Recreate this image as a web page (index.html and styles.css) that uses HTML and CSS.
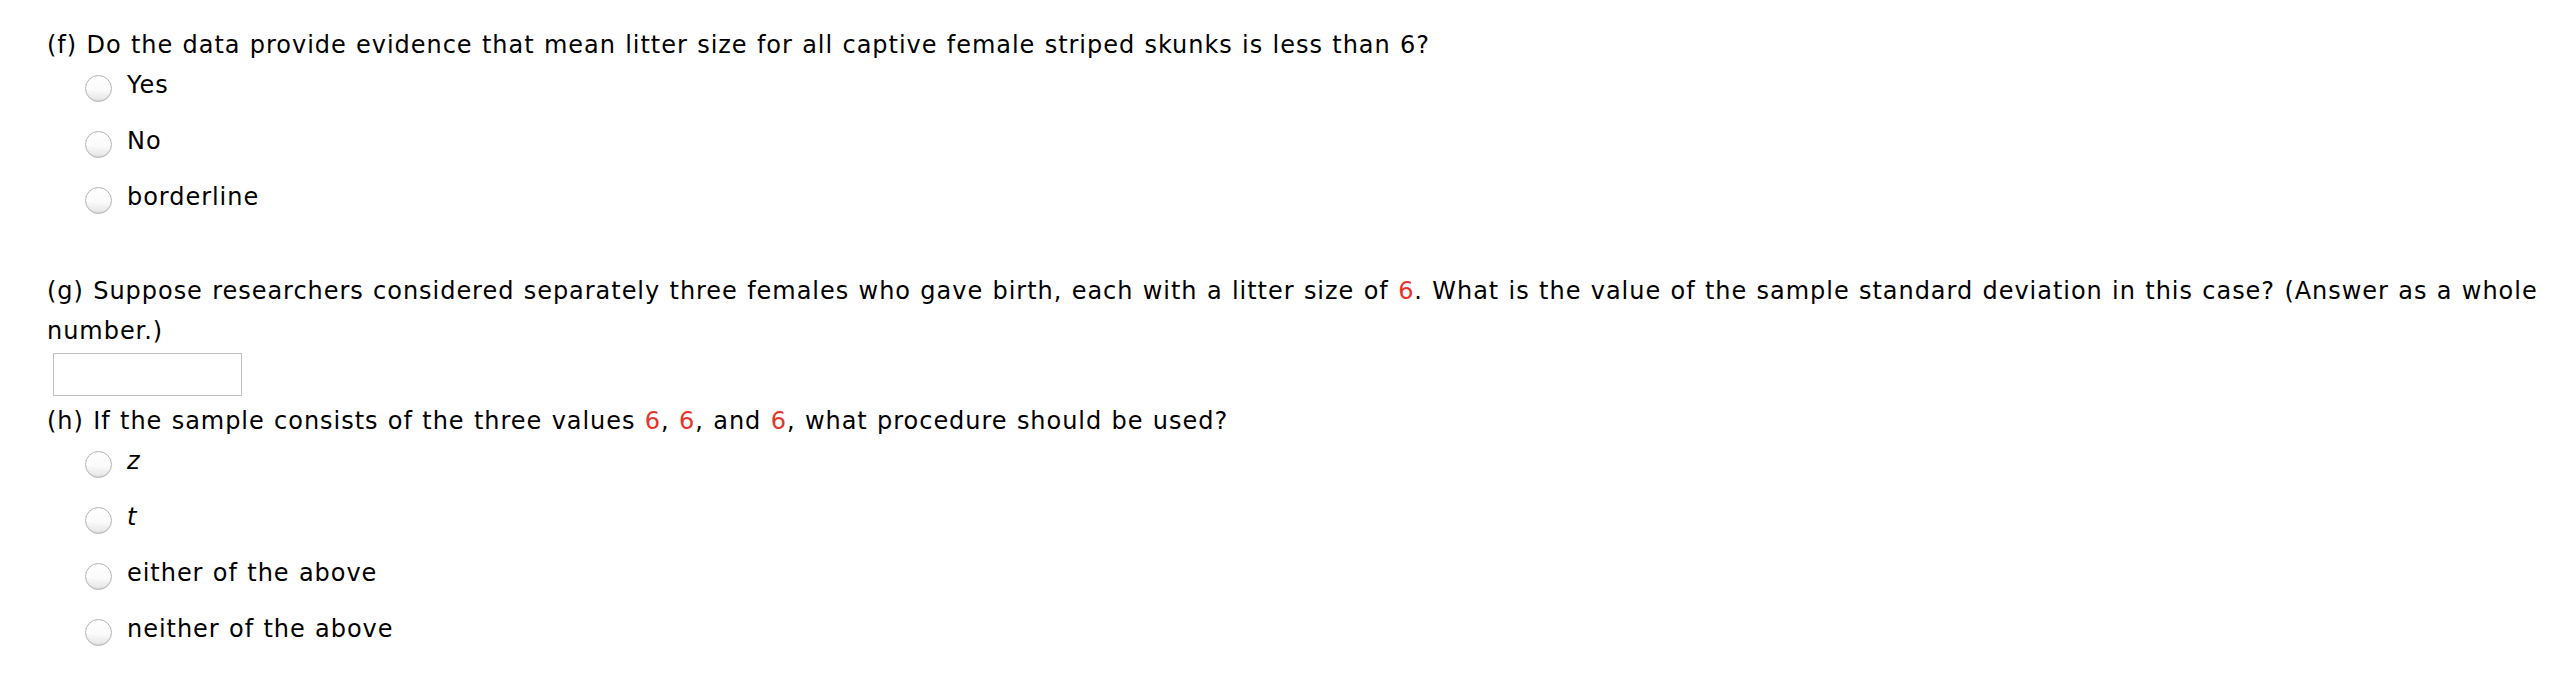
FILE: index.html
```html
<!DOCTYPE html>
<html>
<head>
<meta charset="utf-8">
<link rel="stylesheet" href="styles.css">
</head>
<body>
<div class="page">
  <section class="question q-f">
    <p class="prompt">(f) Do the data provide evidence that mean litter size for all captive female striped skunks is less than 6?</p>
    <ul class="options">
      <li class="option"><input type="radio" class="radio" name="f"><span class="label">Yes</span></li>
      <li class="option"><input type="radio" class="radio" name="f"><span class="label">No</span></li>
      <li class="option"><input type="radio" class="radio" name="f"><span class="label">borderline</span></li>
    </ul>
  </section>
  <section class="question q-g">
    <p class="prompt">(g) Suppose researchers considered separately three females who gave birth, each with a litter size of <span class="num">6</span>. What is the value of the sample standard deviation in this case? (Answer as a whole number.)</p>
    <input type="text" class="answer">
  </section>
  <section class="question q-h">
    <p class="prompt">(h) If the sample consists of the three values <span class="num">6</span>, <span class="num">6</span>, and <span class="num">6</span>, what procedure should be used?</p>
    <ul class="options">
      <li class="option"><input type="radio" class="radio" name="h"><span class="label"><i class="var">z</i></span></li>
      <li class="option"><input type="radio" class="radio" name="h"><span class="label"><i class="var">t</i></span></li>
      <li class="option"><input type="radio" class="radio" name="h"><span class="label">either of the above</span></li>
      <li class="option"><input type="radio" class="radio" name="h"><span class="label">neither of the above</span></li>
    </ul>
  </section>
</div>
</body>
</html>
```
FILE: styles.css
```css
html, body {
  margin: 0;
  padding: 0;
  background: #ffffff;
}

body {
  font-family: "DejaVu Sans", Verdana, sans-serif;
  font-size: 24px;
  line-height: 40px;
  letter-spacing: 0.96px;
  word-spacing: 0.8px;
  color: #000000;
}

.page {
  padding: 25px 20px 0 47px;
  display: flex;
  flex-direction: column;
}

.prompt {
  margin: 0;
}

.options {
  list-style: none;
  margin: 0;
  padding: 0 0 0 38px;
  display: flex;
  flex-direction: column;
  gap: 16px;
}

.option {
  display: flex;
  align-items: flex-start;
  height: 40px;
}

.radio {
  appearance: none;
  -webkit-appearance: none;
  box-sizing: border-box;
  width: 27px;
  height: 27px;
  margin: 10px 15px 0 0;
  border-radius: 50%;
  border: 1px solid #b3b3b3;
  background: linear-gradient(#ffffff 0%, #fbfbfb 55%, #e4e4e4 100%);
  box-shadow: inset 0 -1px 1px rgba(0, 0, 0, 0.06);
  flex: none;
}

.label {
  display: block;
}

.var {
  font-style: italic;
}

.num {
  color: #e6332a;
}

.q-g {
  margin-top: 54px;
}

.answer {
  display: block;
  box-sizing: border-box;
  width: 189px;
  height: 43px;
  margin: 2px 0 0 6px;
  border: 1px solid #c2c2c2;
  background: #ffffff;
  padding: 0;
}

.q-h {
  margin-top: 5px;
}
```
